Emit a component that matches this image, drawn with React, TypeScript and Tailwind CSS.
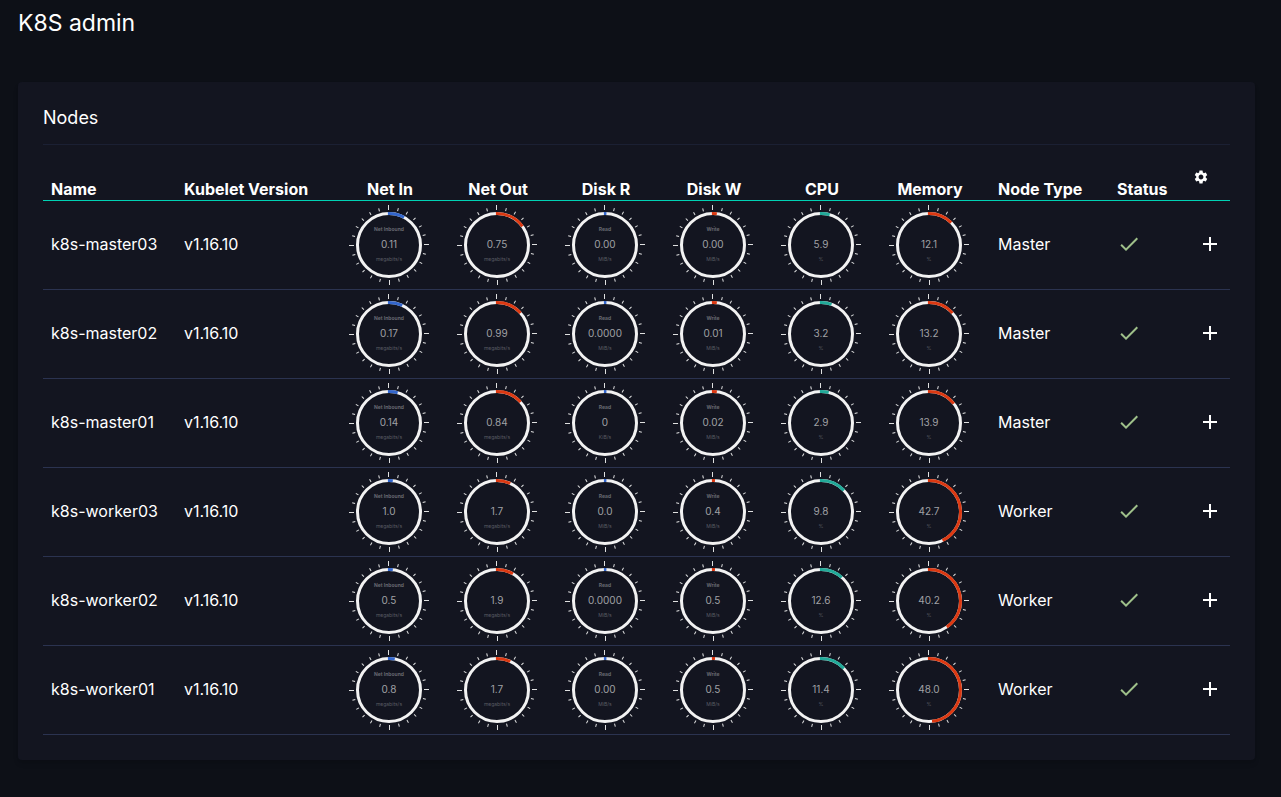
import { MdAdd, MdCheck, MdSettings } from "react-icons/md";

const METRICS = [
  { header: "Net In", label: "Net Inbound", unit: "megabits/s", color: "#3366cc" },
  { header: "Net Out", label: "", unit: "megabits/s", color: "#dc3912" },
  { header: "Disk R", label: "Read", unit: "MiB/s", color: "#3366cc" },
  { header: "Disk W", label: "Write", unit: "MiB/s", color: "#dc3912" },
  { header: "CPU", label: "", unit: "%", color: "#22aa99" },
  { header: "Memory", label: "", unit: "%", color: "#dc3912" },
];

type Gauge = [value: string, percent: number, unit?: string];

type Node = {
  name: string;
  type: string;
  gauges: Gauge[];
};

const NODES: Node[] = [
  {
    name: "k8s-master03",
    type: "Master",
    gauges: [["0.11", 8.5], ["0.75", 15.5], ["0.00", 0], ["0.00", 2.5], ["5.9", 5], ["12.1", 13]],
  },
  {
    name: "k8s-master02",
    type: "Master",
    gauges: [["0.17", 7.5], ["0.99", 14], ["0.0000", 0], ["0.01", 2.5], ["3.2", 6], ["13.2", 14]],
  },
  {
    name: "k8s-master01",
    type: "Master",
    gauges: [["0.14", 5], ["0.84", 14], ["0", 0, "KiB/s"], ["0.02", 2.5], ["2.9", 4.5], ["13.9", 15]],
  },
  {
    name: "k8s-worker03",
    type: "Worker",
    gauges: [["1.0", 2.5], ["1.7", 7.5], ["0.0", 0], ["0.4", 1.6], ["9.8", 13.5], ["42.7", 43.5]],
  },
  {
    name: "k8s-worker02",
    type: "Worker",
    gauges: [["0.5", 2.5], ["1.9", 9], ["0.0000", 0], ["0.5", 1.6], ["12.6", 12], ["40.2", 41]],
  },
  {
    name: "k8s-worker01",
    type: "Worker",
    gauges: [["0.8", 3.5], ["1.7", 7.5], ["0.00", 0], ["0.5", 1.6], ["11.4", 13.5], ["48.0", 49]],
  },
];

const TICKS = Array.from({ length: 24 }, (_, i) => i);

function PieGauge({ label, unit, color, value, percent }: {
  label: string;
  unit: string;
  color: string;
  value: string;
  percent: number;
}) {
  return (
    <div className="relative mx-auto h-20 w-20">
      <svg viewBox="-40 -40 80 80" className="h-20 w-20">
        {/* every sixth tick is a long one */}
        {TICKS.map((i) => (
          <rect
            key={i}
            x={i % 6 === 0 ? -40 : -38}
            y={0}
            width={i % 6 === 0 ? 5 : 3}
            height={1}
            fill="#dfe0e0"
            transform={`rotate(${i * 15})`}
          />
        ))}
        <circle r={31.5} fill="none" stroke="#f2f2f2" strokeWidth={3} />
        <circle
          r={31.5}
          fill="none"
          stroke={color}
          strokeWidth={3}
          pathLength={100}
          strokeDasharray={`${Math.max(percent, 1.3)} 100`}
          transform="rotate(-92)"
        />
      </svg>
      <div className="absolute inset-0 flex flex-col items-center justify-center pb-0.5 text-center">
        <span className="h-2 text-[5px] leading-2 font-bold text-[#666870]">{label}</span>
        <span className="my-1 text-[10px] leading-[14px] text-[#a0a1a5]">{value}</span>
        <span className="h-2 text-[5px] leading-2 text-[#5a5c64]">{unit}</span>
      </div>
    </div>
  );
}

export default function App() {
  return (
    <div className="min-h-screen bg-[#0d1017] pr-[26px] pb-9 pl-[18px] font-['Inter',sans-serif] text-white">
      <h1 className="pt-2 text-[23px] leading-[30px]">K8S admin</h1>

      <section className="mt-11 rounded bg-[#131520] p-[25px] shadow-md">
        <h2 className="border-b border-[#1b2033] pb-4 text-[18px] leading-[21px]">Nodes</h2>

        <table className="w-full table-fixed border-separate border-spacing-0 text-base">
          <colgroup>
            <col className="w-[133px]" />
            <col className="w-[159px]" />
            {METRICS.map((m) => (
              <col key={m.header} className="w-[108px]" />
            ))}
            <col className="w-[126px]" />
            <col className="w-[76px]" />
            <col className="w-[45px]" />
          </colgroup>
          <thead>
            <tr className="h-14 text-left align-bottom leading-[22px] whitespace-nowrap [&>th]:border-b [&>th]:border-[#00d2b4]">
              <th className="px-2">Name</th>
              <th className="px-2">Kubelet Version</th>
              {METRICS.map((m) => (
                <th key={m.header} className="pl-0.5 text-center">{m.header}</th>
              ))}
              <th className="pl-[15px]">Node Type</th>
              <th className="pl-2">Status</th>
              <th className="px-2 pb-[15px]">
                <button aria-label="Settings" className="block h-4 w-4">
                  <MdSettings className="h-4 w-4" />
                </button>
              </th>
            </tr>
          </thead>
          <tbody>
            {NODES.map((node) => (
              <tr key={node.name} className="h-[89px] [&>td]:border-b [&>td]:border-[#2b3350]">
                <td className="px-2 pb-0.5">{node.name}</td>
                <td className="px-2 pb-0.5">v1.16.10</td>
                {METRICS.map((m, i) => {
                  const [value, percent, unit] = node.gauges[i];
                  return (
                    <td key={m.header}>
                      <PieGauge label={m.label} unit={unit ?? m.unit} color={m.color} value={value} percent={percent} />
                    </td>
                  );
                })}
                <td className="pb-0.5 pl-[15px]">{node.type}</td>
                <td className="pb-0.5 pl-2">
                  <MdCheck className="h-6 w-6 text-[#9fc08a]" />
                </td>
                <td className="pr-2 pb-0.5">
                  <button aria-label={`Expand ${node.name}`} className="ml-auto block h-6 w-6">
                    <MdAdd className="h-6 w-6" />
                  </button>
                </td>
              </tr>
            ))}
          </tbody>
        </table>
      </section>
    </div>
  );
}
